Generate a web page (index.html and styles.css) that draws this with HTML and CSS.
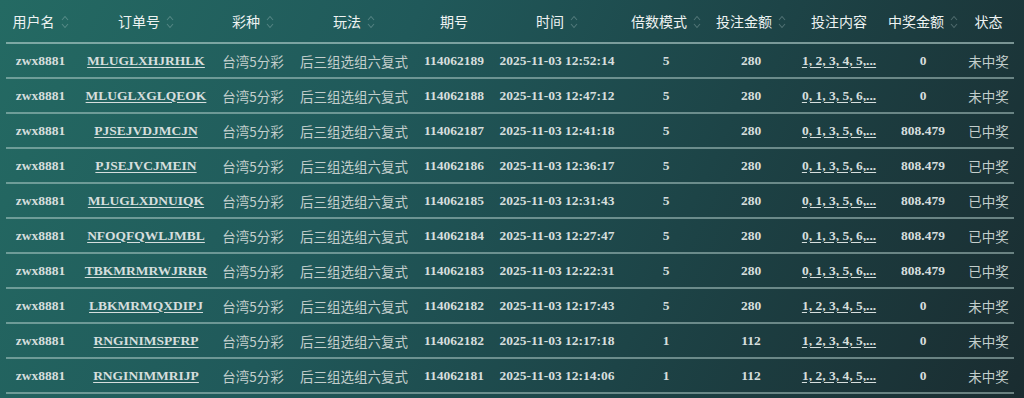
FILE: index.html
```html
<!DOCTYPE html>
<html lang="zh">
<head>
<meta charset="utf-8">
<title>投注记录</title>
<link rel="stylesheet" href="styles.css">
</head>
<body>
<div class="wrap">
<table class="orders">
<colgroup>
<col class="c1"><col class="c2"><col class="c3"><col class="c4"><col class="c5"><col class="c6"><col class="c7"><col class="c8"><col class="c9"><col class="c10"><col class="c11">
</colgroup>
<thead>
<tr>
<th>用户名<svg class="sort" viewBox="0 0 8 16"><path d="M1 6 L4 2.5 L7 6 M1 10 L4 13.5 L7 10"/></svg></th>
<th>订单号<svg class="sort" viewBox="0 0 8 16"><path d="M1 6 L4 2.5 L7 6 M1 10 L4 13.5 L7 10"/></svg></th>
<th>彩种<svg class="sort" viewBox="0 0 8 16"><path d="M1 6 L4 2.5 L7 6 M1 10 L4 13.5 L7 10"/></svg></th>
<th>玩法<svg class="sort" viewBox="0 0 8 16"><path d="M1 6 L4 2.5 L7 6 M1 10 L4 13.5 L7 10"/></svg></th>
<th>期号</th>
<th>时间<svg class="sort" viewBox="0 0 8 16"><path d="M1 6 L4 2.5 L7 6 M1 10 L4 13.5 L7 10"/></svg></th>
<th>倍数模式<svg class="sort" viewBox="0 0 8 16"><path d="M1 6 L4 2.5 L7 6 M1 10 L4 13.5 L7 10"/></svg></th>
<th>投注金额<svg class="sort" viewBox="0 0 8 16"><path d="M1 6 L4 2.5 L7 6 M1 10 L4 13.5 L7 10"/></svg></th>
<th>投注内容</th>
<th>中奖金额<svg class="sort" viewBox="0 0 8 16"><path d="M1 6 L4 2.5 L7 6 M1 10 L4 13.5 L7 10"/></svg></th>
<th>状态</th>
</tr>
</thead>
<tbody>
<tr><td class="num">zwx8881</td><td class="num"><a href="#">MLUGLXHJRHLK</a></td><td class="cjk">台湾5分彩</td><td class="cjk">后三组选组六复式</td><td class="num">114062189</td><td class="num">2025-11-03 12:52:14</td><td class="num">5</td><td class="num">280</td><td class="num"><a href="#">1, 2, 3, 4, 5,...</a></td><td class="num">0</td><td class="cjk">未中奖</td></tr>
<tr><td class="num">zwx8881</td><td class="num"><a href="#">MLUGLXGLQEOK</a></td><td class="cjk">台湾5分彩</td><td class="cjk">后三组选组六复式</td><td class="num">114062188</td><td class="num">2025-11-03 12:47:12</td><td class="num">5</td><td class="num">280</td><td class="num"><a href="#">0, 1, 3, 5, 6,...</a></td><td class="num">0</td><td class="cjk">未中奖</td></tr>
<tr><td class="num">zwx8881</td><td class="num"><a href="#">PJSEJVDJMCJN</a></td><td class="cjk">台湾5分彩</td><td class="cjk">后三组选组六复式</td><td class="num">114062187</td><td class="num">2025-11-03 12:41:18</td><td class="num">5</td><td class="num">280</td><td class="num"><a href="#">0, 1, 3, 5, 6,...</a></td><td class="num">808.479</td><td class="cjk">已中奖</td></tr>
<tr><td class="num">zwx8881</td><td class="num"><a href="#">PJSEJVCJMEIN</a></td><td class="cjk">台湾5分彩</td><td class="cjk">后三组选组六复式</td><td class="num">114062186</td><td class="num">2025-11-03 12:36:17</td><td class="num">5</td><td class="num">280</td><td class="num"><a href="#">0, 1, 3, 5, 6,...</a></td><td class="num">808.479</td><td class="cjk">已中奖</td></tr>
<tr><td class="num">zwx8881</td><td class="num"><a href="#">MLUGLXDNUIQK</a></td><td class="cjk">台湾5分彩</td><td class="cjk">后三组选组六复式</td><td class="num">114062185</td><td class="num">2025-11-03 12:31:43</td><td class="num">5</td><td class="num">280</td><td class="num"><a href="#">0, 1, 3, 5, 6,...</a></td><td class="num">808.479</td><td class="cjk">已中奖</td></tr>
<tr><td class="num">zwx8881</td><td class="num"><a href="#">NFOQFQWLJMBL</a></td><td class="cjk">台湾5分彩</td><td class="cjk">后三组选组六复式</td><td class="num">114062184</td><td class="num">2025-11-03 12:27:47</td><td class="num">5</td><td class="num">280</td><td class="num"><a href="#">0, 1, 3, 5, 6,...</a></td><td class="num">808.479</td><td class="cjk">已中奖</td></tr>
<tr><td class="num">zwx8881</td><td class="num"><a href="#">TBKMRMRWJRRR</a></td><td class="cjk">台湾5分彩</td><td class="cjk">后三组选组六复式</td><td class="num">114062183</td><td class="num">2025-11-03 12:22:31</td><td class="num">5</td><td class="num">280</td><td class="num"><a href="#">0, 1, 3, 5, 6,...</a></td><td class="num">808.479</td><td class="cjk">已中奖</td></tr>
<tr><td class="num">zwx8881</td><td class="num"><a href="#">LBKMRMQXDIPJ</a></td><td class="cjk">台湾5分彩</td><td class="cjk">后三组选组六复式</td><td class="num">114062182</td><td class="num">2025-11-03 12:17:43</td><td class="num">5</td><td class="num">280</td><td class="num"><a href="#">1, 2, 3, 4, 5,...</a></td><td class="num">0</td><td class="cjk">未中奖</td></tr>
<tr><td class="num">zwx8881</td><td class="num"><a href="#">RNGINIMSPFRP</a></td><td class="cjk">台湾5分彩</td><td class="cjk">后三组选组六复式</td><td class="num">114062182</td><td class="num">2025-11-03 12:17:18</td><td class="num">1</td><td class="num">112</td><td class="num"><a href="#">1, 2, 3, 4, 5,...</a></td><td class="num">0</td><td class="cjk">未中奖</td></tr>
<tr><td class="num">zwx8881</td><td class="num"><a href="#">RNGINIMMRIJP</a></td><td class="cjk">台湾5分彩</td><td class="cjk">后三组选组六复式</td><td class="num">114062181</td><td class="num">2025-11-03 12:14:06</td><td class="num">1</td><td class="num">112</td><td class="num"><a href="#">1, 2, 3, 4, 5,...</a></td><td class="num">0</td><td class="cjk">未中奖</td></tr>
</tbody>
</table>
</div>
</body>
</html>
```

FILE: styles.css
```css
html, body {
  margin: 0;
  padding: 0;
  height: 100%;
}
body {
  background: linear-gradient(115deg, #246a63 0%, #20595a 35%, #1d4447 65%, #1a2c30 100%);
  color: #d8e0df;
  font-family: "Noto Sans CJK SC", "Noto Sans", sans-serif;
  overflow: hidden;
}
.wrap {
  padding: 0 10px 0 6px;
}
.orders {
  width: 1008px;
  border-collapse: collapse;
  table-layout: fixed;
}
.c1 { width: 69px; }
.c2 { width: 142px; }
.c3 { width: 72px; }
.c4 { width: 130px; }
.c5 { width: 70px; }
.c6 { width: 136px; }
.c7 { width: 82px; }
.c8 { width: 88px; }
.c9 { width: 88px; }
.c10 { width: 80px; }
.c11 { width: 51px; }

.orders th {
  height: 42px;
  padding: 0;
  font-size: 14px;
  font-weight: 400;
  color: #eef3f2;
  text-align: center;
  white-space: nowrap;
  border-bottom: 2px solid rgba(185, 212, 208, 0.6);
}
.sort {
  width: 8px;
  height: 16px;
  margin-left: 6px;
  vertical-align: -3px;
  fill: none;
  stroke: rgba(200, 220, 218, 0.3);
  stroke-width: 1.1;
}
.orders td {
  height: 33px;
  padding: 0;
  text-align: center;
  white-space: nowrap;
  border-bottom: 2px solid rgba(185, 212, 208, 0.5);
}
.num {
  font-family: "Liberation Serif", "Times New Roman", serif;
  font-weight: 700;
  font-size: 13.5px;
  color: #d6dedd;
}
.cjk {
  font-size: 13.5px;
  font-weight: 400;
  color: #c3cecc;
}
.orders a {
  color: #d6dedd;
  text-decoration: underline;
  text-underline-offset: 2px;
}
```
